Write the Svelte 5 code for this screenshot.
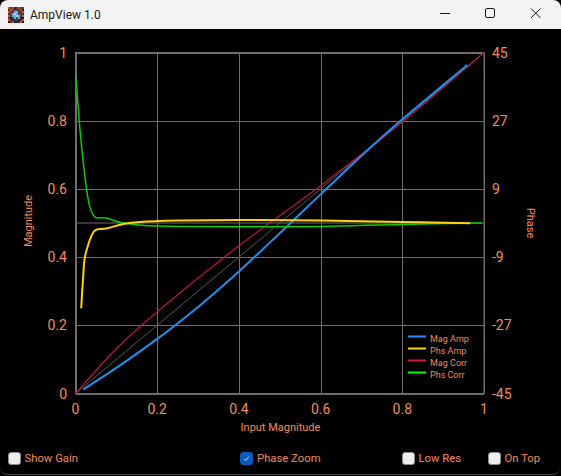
<script>
  const X0 = 75.5, X1 = 484, Y0 = 393.5, Y1 = 52.5;
  const px = (v) => X0 + (X1 - X0) * v;
  const py = (v) => Y0 - (Y0 - Y1) * v;

  const xTicks = [0, 0.2, 0.4, 0.6, 0.8, 1];
  const phase = [45, 27, 9, -9, -27, -45];

  // smooth line through the sampled points
  function curve(pts) {
    const p = pts.map(([x, y]) => [px(x), py(y)]);
    let d = `M${p[0][0].toFixed(1)} ${p[0][1].toFixed(1)}`;
    for (let i = 0; i < p.length - 1; i++) {
      const a = p[Math.max(i - 1, 0)], b = p[i], c = p[i + 1], e = p[Math.min(i + 2, p.length - 1)];
      const c1 = [b[0] + (c[0] - a[0]) / 6, b[1] + (c[1] - a[1]) / 6];
      const c2 = [c[0] - (e[0] - b[0]) / 6, c[1] - (e[1] - b[1]) / 6];
      d += `C${c1[0].toFixed(1)} ${c1[1].toFixed(1)} ${c2[0].toFixed(1)} ${c2[1].toFixed(1)} ${c[0].toFixed(1)} ${c[1].toFixed(1)}`;
    }
    return d;
  }

  const series = [
    { label: 'Mag Corr', color: '#b5173a', width: 1.3, pts: [[0, 0], [0.1, 0.131], [0.2, 0.24], [0.4, 0.433], [0.6, 0.609], [0.8, 0.796], [1, 1]] },
    { label: 'Mag Amp', color: '#2090f0', width: 2, pts: [[0.019, 0.012], [0.1, 0.075], [0.2, 0.16], [0.3, 0.254], [0.4, 0.358], [0.5, 0.47], [0.6, 0.584], [0.72, 0.719], [0.8, 0.804], [0.959, 0.963]] },
    { label: 'Phs Corr', color: '#08cc08', width: 1.5, pts: [[0.001, 0.929], [0.0093, 0.797], [0.0176, 0.694], [0.027, 0.6], [0.035, 0.548], [0.048, 0.517], [0.076, 0.515], [0.117, 0.5], [0.2, 0.491], [0.4, 0.489], [0.6, 0.49], [0.8, 0.496], [0.995, 0.5]] },
    { label: 'Phs Amp', color: '#ffd20a', width: 2, pts: [[0.014, 0.25], [0.018, 0.33], [0.023, 0.4], [0.035, 0.45], [0.045, 0.475], [0.056, 0.482], [0.076, 0.484], [0.117, 0.497], [0.158, 0.503], [0.25, 0.507], [0.4, 0.509], [0.6, 0.507], [0.8, 0.503], [0.966, 0.499]] }
  ];

  const legend = [
    { label: 'Mag Amp', color: '#1e90ff' },
    { label: 'Phs Amp', color: '#ffd700' },
    { label: 'Mag Corr', color: '#dc143c' },
    { label: 'Phs Corr', color: '#00ff00' }
  ];

  // app icon, 8x8 cells
  const k = { r: '#6b2a22', o: '#c9562c', d: '#33201e', b: '#2f4d6b', l: '#7fa6c4', w: '#b5d0e2', n: '#15202c' };
  const iconRows = ['orodrorb', 'rorbbrod', 'orbllbro', 'rblwlbbr', 'obllwlbo', 'rnblblnd', 'ornbbnro', 'drondrod'];
  const iconCells = iconRows.flatMap((row, y) => [...row].map((c, x) => ({ x: x * 2, y: y * 2, fill: k[c] })));

  let options = $state([
    { label: 'Show Gain', checked: false },
    { label: 'Phase Zoom', checked: true },
    { label: 'Low Res', checked: false },
    { label: 'On Top', checked: false }
  ]);
</script>

<div class="window">
  <header class="titlebar">
    <svg class="appicon" viewBox="0 0 16 16" width="16" height="16">
      {#each iconCells as c}
        <rect x={c.x} y={c.y} width="2" height="2" fill={c.fill} />
      {/each}
    </svg>
    <span class="title">AmpView 1.0</span>
    <div class="controls">
      <svg viewBox="0 0 46 29" width="46" height="29"><path d="M18 13.5h10" stroke="#1a1a1a" fill="none" /></svg>
      <svg viewBox="0 0 46 29" width="46" height="29"><rect x="17.5" y="8.5" width="9" height="9" rx="1.5" stroke="#1a1a1a" fill="none" /></svg>
      <svg viewBox="0 0 46 29" width="46" height="29"><path d="M17 8.5l9.5 9.5M26.5 8.5l-9.5 9.5" stroke="#1a1a1a" fill="none" /></svg>
    </div>
  </header>

  <svg class="chart" viewBox="0 29 561 413" width="561" height="413">
    <rect x={X0} y={Y1} width={X1 - X0} height={Y0 - Y1} fill="#000" stroke="#6e6e6e" />
    {#each xTicks as t}
      <line x1={Math.round(px(t)) + 0.5} x2={Math.round(px(t)) + 0.5} y1={Y1} y2={Y0} class="grid" />
      <line y1={Math.round(py(t)) + 0.5} y2={Math.round(py(t)) + 0.5} x1={X0} x2={X1} class="grid" />
      <text x={px(t)} y={Y0 + 20} text-anchor="middle" class="tick">{t}</text>
      <text x={X0 - 8.5} y={py(t) + 5} text-anchor="end" class="tick">{t}</text>
    {/each}
    <line x1={X0} x2={X1} y1={py(0.5)} y2={py(0.5)} class="grid" />
    {#each phase as p, i}
      <text x={X1 + 8} y={Y1 + i * 68.2 + 5} class="tick">{p}</text>
    {/each}
    <line x1={X0} y1={Y0} x2={X1} y2={Y1} stroke="#555" stroke-width="1" />

    {#each series as s}
      <path d={curve(s.pts)} fill="none" stroke={s.color} stroke-width={s.width} />
    {/each}

    <text x="280.5" y="431" text-anchor="middle" class="axis">Input Magnitude</text>
    <text transform="translate(31.5 221) rotate(-90)" text-anchor="middle" class="axis">Magnitude</text>
    <text transform="translate(527 223) rotate(90)" text-anchor="middle" class="axis">Phase</text>

    {#each legend as l, i}
      <line x1="408" x2="426" y1={336.5 + i * 12} y2={336.5 + i * 12} stroke={l.color} stroke-width="2" />
      <text x="430" y={341.5 + i * 12} class="legend">{l.label}</text>
    {/each}
  </svg>

  <div class="options">
    {#each options as o}
      <label class="option">
        <input type="checkbox" bind:checked={o.checked} />
        <span class="box">
          {#if o.checked}
            <svg viewBox="0 0 13 13" width="13" height="13"><path d="M3.5 6.8l2 2 4-4.5" fill="none" stroke="#e8f0fa" stroke-width="1" /></svg>
          {/if}
        </span>
        {o.label}
      </label>
    {/each}
  </div>
</div>

<style>
  :global(body) {
    margin: 0;
    background: #000;
  }

  .window {
    position: relative;
    width: 561px;
    height: 476px;
    background: #000;
    font-family: "Roboto", "Liberation Sans", sans-serif;
    overflow: hidden;
  }

  /* thin window frame, drawn over the content */
  .window::after {
    content: "";
    position: absolute;
    inset: 0 1px 1px 0;
    border-bottom: 1px solid #444;
    border-radius: 8px;
    pointer-events: none;
  }

  .titlebar {
    height: 29px;
    background: #f3f3f3;
    display: flex;
    align-items: center;
    padding-left: 8px;
    border-radius: 8px 8px 0 0;
  }

  .title {
    margin-left: 6px;
    font-size: 12px;
    color: #1a1a1a;
  }

  .controls {
    margin-left: auto;
    display: flex;
    padding-right: 1px;
  }

  .chart {
    display: block;
  }

  .grid {
    stroke: #6e6e6e;
    stroke-width: 1;
  }

  .tick {
    fill: #f58a56;
    font-size: 14px;
    font-family: "Roboto", "Liberation Sans", sans-serif;
  }

  .axis {
    fill: #f58a56;
    font-size: 11px;
    font-family: "Roboto", "Liberation Sans", sans-serif;
  }

  .legend {
    fill: #f58a56;
    font-size: 9px;
    font-family: "Roboto", "Liberation Sans", sans-serif;
  }

  .options {
    display: grid;
    grid-template-columns: 232.5px 161.5px 86px 1fr;
    padding: 8px 0 0 7.5px;
    color: #f58a56;
    font-size: 11.3px;
  }

  .option {
    display: flex;
    align-items: center;
    gap: 4px;
    height: 17px;
  }

  .option input {
    display: none;
  }

  .box {
    box-sizing: border-box;
    width: 13px;
    height: 13px;
    border-radius: 3px;
    background: #eeeeee;
    border: 1px solid #8c8c8c;
    display: flex;
    align-items: center;
    justify-content: center;
  }

  .option input:checked + .box {
    background: #0a5cb8;
    border-color: #0a5cb8;
  }
</style>
